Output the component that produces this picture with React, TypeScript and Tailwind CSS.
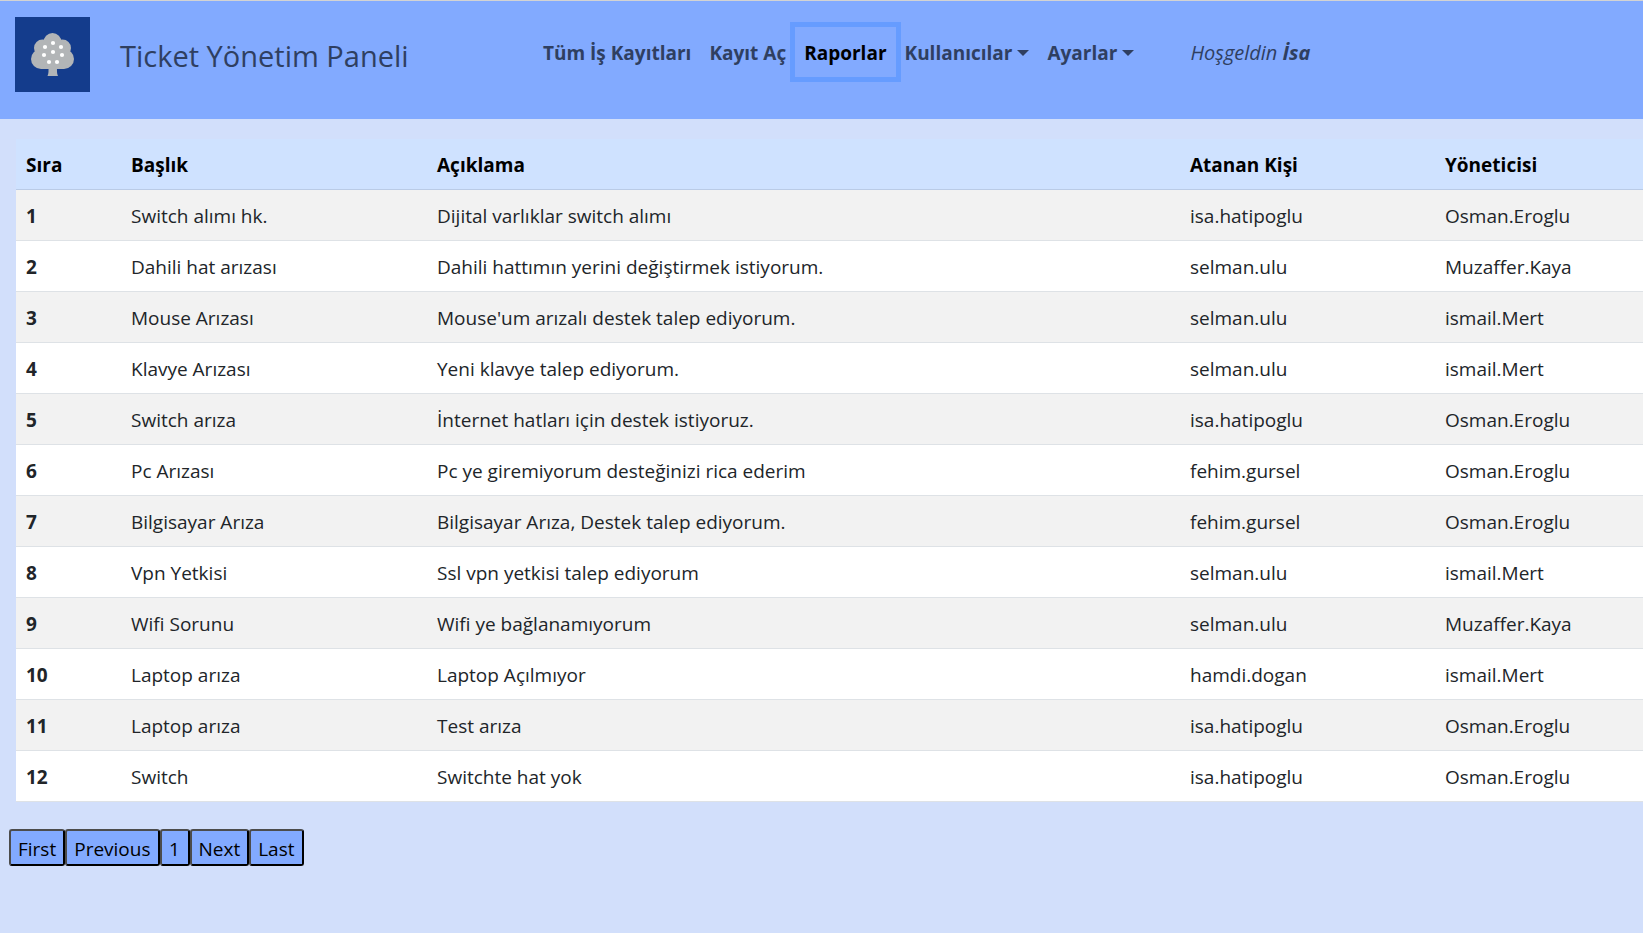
import React from "react";

type Ticket = { title: string; description: string; assignee: string; manager: string };

const tickets: Ticket[] = [
  { title: "Switch alımı hk.", description: "Dijital varlıklar switch alımı", assignee: "isa.hatipoglu", manager: "Osman.Eroglu" },
  { title: "Dahili hat arızası", description: "Dahili hattımın yerini değiştirmek istiyorum.", assignee: "selman.ulu", manager: "Muzaffer.Kaya" },
  { title: "Mouse Arızası", description: "Mouse'um arızalı destek talep ediyorum.", assignee: "selman.ulu", manager: "ismail.Mert" },
  { title: "Klavye Arızası", description: "Yeni klavye talep ediyorum.", assignee: "selman.ulu", manager: "ismail.Mert" },
  { title: "Switch arıza", description: "İnternet hatları için destek istiyoruz.", assignee: "isa.hatipoglu", manager: "Osman.Eroglu" },
  { title: "Pc Arızası", description: "Pc ye giremiyorum desteğinizi rica ederim", assignee: "fehim.gursel", manager: "Osman.Eroglu" },
  { title: "Bilgisayar Arıza", description: "Bilgisayar Arıza, Destek talep ediyorum.", assignee: "fehim.gursel", manager: "Osman.Eroglu" },
  { title: "Vpn Yetkisi", description: "Ssl vpn yetkisi talep ediyorum", assignee: "selman.ulu", manager: "ismail.Mert" },
  { title: "Wifi Sorunu", description: "Wifi ye bağlanamıyorum", assignee: "selman.ulu", manager: "Muzaffer.Kaya" },
  { title: "Laptop arıza", description: "Laptop Açılmıyor", assignee: "hamdi.dogan", manager: "ismail.Mert" },
  { title: "Laptop arıza", description: "Test arıza", assignee: "isa.hatipoglu", manager: "Osman.Eroglu" },
  { title: "Switch", description: "Switchte hat yok", assignee: "isa.hatipoglu", manager: "Osman.Eroglu" },
];

const dots = [[38, 26], [30, 30], [46, 30], [29, 38], [38, 35], [47, 38], [34, 45], [42, 45]];

const cell = "border-b border-[#dee2e6] px-[10px] pb-[9px] pt-[11px]";
const navItem = "px-[9px] pb-[9px] pt-[11px]";

function TreeLogo() {
  return (
    <svg viewBox="0 0 75 75" className="block size-[75px] shrink-0 bg-[#143c8c]" aria-hidden="true">
      <g fill="#b2b5b7">
        <circle cx="37.5" cy="25" r="9" />
        <circle cx="27.5" cy="31" r="8.5" />
        <circle cx="47.5" cy="31" r="8.5" />
        <circle cx="26" cy="42" r="10" />
        <circle cx="49" cy="42" r="10" />
        <path d="M26 28h23v24H26z" />
        <path d="M33.5 50h8.5c0 4-.3 6.5 1 9H32.5c1.3-2.5 1-5 1-9z" />
      </g>
      <g fill="#fff">
        {dots.map(([x, y]) => (
          <circle key={`${x}-${y}`} cx={x} cy={y} r="2.1" />
        ))}
      </g>
    </svg>
  );
}

function Caret() {
  return (
    <svg viewBox="0 0 12 6" className="h-[6px] w-3" fill="currentColor" aria-hidden="true">
      <path d="M0 0h12L6 6z" />
    </svg>
  );
}

export default function App() {
  return (
    <div className="min-h-screen bg-[#d2dffb] font-['Open_Sans','Noto_Sans',sans-serif] text-[19px] leading-[30px] text-[#212529]">
      <header className="flex items-start border-t border-[#d3d3d3] bg-[#82aaff] pb-[27px] pl-[15px] pt-4 text-[#2f3f61]">
        <a href="#" aria-label="Ana sayfa">
          <TreeLogo />
        </a>
        <h1 className="ml-[30px] mt-[21px] w-[414px] text-[29px] font-medium leading-9">Ticket Yönetim Paneli</h1>
        <nav className="mt-[10px] flex font-bold">
          <a href="#" className={navItem}>Tüm İş Kayıtları</a>
          <a href="#" className={navItem}>Kayıt Aç</a>
          <a href="#" aria-current="page" className={`${navItem} text-black ring-[5px] ring-[#669cff]`}>Raporlar</a>
          <button type="button" className={`${navItem} flex items-center gap-[5px]`}>Kullanıcılar<Caret /></button>
          <button type="button" className={`${navItem} flex items-center gap-[5px]`}>Ayarlar<Caret /></button>
        </nav>
        <p className="ml-[47px] mt-[21px] text-xl leading-[30px] italic">Hoşgeldin <strong className="font-bold">İsa</strong></p>
      </header>
      <main className="pt-5">
        <div className="pl-4">
          <table className="w-full table-fixed border-separate border-spacing-0 text-left">
            <colgroup>
              <col className="w-[105px]" />
              <col className="w-[306px]" />
              <col />
              <col className="w-[255px]" />
              <col className="w-[208px]" />
            </colgroup>
            <thead>
              <tr className="bg-[#cfe2ff] text-black">
                {["Sıra", "Başlık", "Açıklama", "Atanan Kişi", "Yöneticisi"].map((label) => (
                  <th key={label} scope="col" className="border-b border-[#bacbe6] px-[10px] pb-[9px] pt-[11px] font-bold">{label}</th>
                ))}
              </tr>
            </thead>
            <tbody>
              {tickets.map((t, i) => (
                <tr key={i} className="bg-white odd:bg-[#f2f2f2]">
                  <th scope="row" className={`${cell} font-bold`}>{i + 1}</th>
                  <td className={cell}>{t.title}</td>
                  <td className={cell}>{t.description}</td>
                  <td className={cell}>{t.assignee}</td>
                  <td className={cell}>{t.manager}</td>
                </tr>
              ))}
            </tbody>
          </table>
        </div>
        <div className="flex pl-[9px] pt-[27px]">
          {["First", "Previous", "1", "Next", "Last"].map((label) => (
            <button key={label} type="button" className="h-[37px] min-w-[30px] rounded-[3px] border-2 border-b-black border-l-[#4c4c4c] border-r-black border-t-[#4c4c4c] bg-[#82aaff] px-[7px] pt-[2px] text-black">{label}</button>
          ))}
        </div>
      </main>
    </div>
  );
}
